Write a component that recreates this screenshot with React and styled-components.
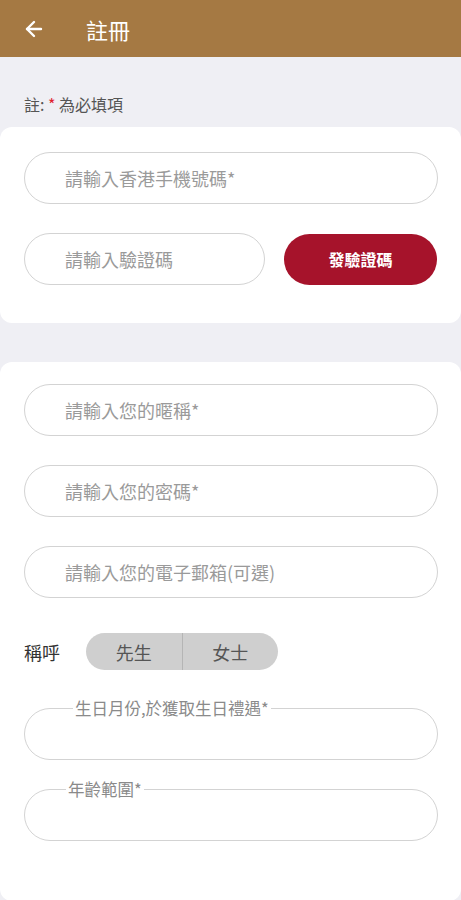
import React from 'react';
import styled, { createGlobalStyle } from 'styled-components';
import { ArrowLeft } from 'lucide-react';

const GlobalStyle = createGlobalStyle`
  body {
    margin: 0;
    background: #efeff4;
    font-family: "Noto Sans CJK TC", "Noto Sans", sans-serif;
  }
`;

const Page = styled.div`
  width: 461px;
  min-height: 900px;
  background: #efeff4;
  display: flex;
  flex-direction: column;
`;

const Header = styled.header`
  height: 57px;
  background: #a57943;
  display: flex;
  align-items: center;
  padding-left: 22px;
  color: #fff;
`;

const BackButton = styled.button`
  border: none;
  background: none;
  padding: 0;
  color: #fff;
  display: flex;
  width: 24px;
  margin-right: 40px;
`;

const Title = styled.h1`
  margin: 0;
  font-size: 22px;
  font-weight: 400;
`;

const Note = styled.p`
  margin: 0;
  padding: 36px 24px 12px;
  font-size: 16px;
  line-height: 22px;
  color: #555;
`;

const Star = styled.span`
  color: #e0202e;
`;

const Card = styled.section`
  background: #fff;
  border-radius: 12px;
  padding: ${(p) => p.$pad};
  display: flex;
  flex-direction: column;
  gap: 29px;
  margin-bottom: ${(p) => p.$after || '0'};
  flex: ${(p) => (p.$grow ? 1 : 'none')};
`;

const Input = styled.input`
  box-sizing: border-box;
  height: 52px;
  width: ${(p) => p.$width || '100%'};
  border: 1px solid #d3d3d3;
  border-radius: 26px;
  padding: 0 0 0 40px;
  font-family: inherit;
  font-size: 18px;
  color: #333;
  background: #fff;
  outline: none;
  &::placeholder {
    color: #9a9a9a;
  }
`;

const Row = styled.div`
  display: flex;
  align-items: center;
  gap: 19px;
`;

const SendButton = styled.button`
  width: 153px;
  height: 51px;
  border: none;
  border-radius: 26px;
  background: #a6132b;
  color: #fff;
  font-family: inherit;
  font-size: 16px;
  font-weight: 700;
`;

const TitleRow = styled.div`
  display: flex;
  align-items: center;
  margin-top: 6px;
`;

const Label = styled.span`
  font-size: 18px;
  color: #333;
  width: 62px;
`;

const Segment = styled.div`
  display: flex;
  width: 192px;
  height: 37px;
  border-radius: 19px;
  background: #cfcfcf;
  overflow: hidden;
`;

const SegmentItem = styled.button`
  flex: 1;
  border: none;
  background: none;
  font-family: inherit;
  font-size: 18px;
  color: #555;
  & + & {
    border-left: 1px solid #b5b5b5;
  }
`;

const Field = styled.fieldset`
  margin: 0;
  margin-top: ${(p) => p.$top || '0'};
  height: 60px;
  box-sizing: border-box;
  border: 1px solid #d3d3d3;
  border-radius: 26px;
  padding: 0 0 0 ${(p) => p.$indent};
`;

const Legend = styled.legend`
  font-size: 16.5px;
  line-height: 16px;
  color: #8a8a8a;
  padding: 0 2px;
`;

export default function App() {
  return (
    <Page>
      <GlobalStyle />
      <Header>
        <BackButton aria-label="返回">
          <ArrowLeft size={24} strokeWidth={2.4} />
        </BackButton>
        <Title>註冊</Title>
      </Header>
      <Note>
        註: <Star>*</Star> 為必填項
      </Note>
      <Card $pad="25px 23px 38px 24px" $after="39px">
        <Input placeholder="請輸入香港手機號碼*" />
        <Row>
          <Input $width="241px" placeholder="請輸入驗證碼" />
          <SendButton>發驗證碼</SendButton>
        </Row>
      </Card>
      <Card $pad="22px 23px 60px 24px" $grow>
        <Input placeholder="請輸入您的暱稱*" />
        <Input placeholder="請輸入您的密碼*" />
        <Input placeholder="請輸入您的電子郵箱(可選)" />
        <TitleRow>
          <Label>稱呼</Label>
          <Segment>
            <SegmentItem>先生</SegmentItem>
            <SegmentItem>女士</SegmentItem>
          </Segment>
        </TitleRow>
        <Field $indent="48px" $top="1px">
          <Legend>生日月份,於獲取生日禮遇*</Legend>
        </Field>
        <Field $indent="41px" $top="-8px">
          <Legend>年齡範圍*</Legend>
        </Field>
      </Card>
    </Page>
  );
}
